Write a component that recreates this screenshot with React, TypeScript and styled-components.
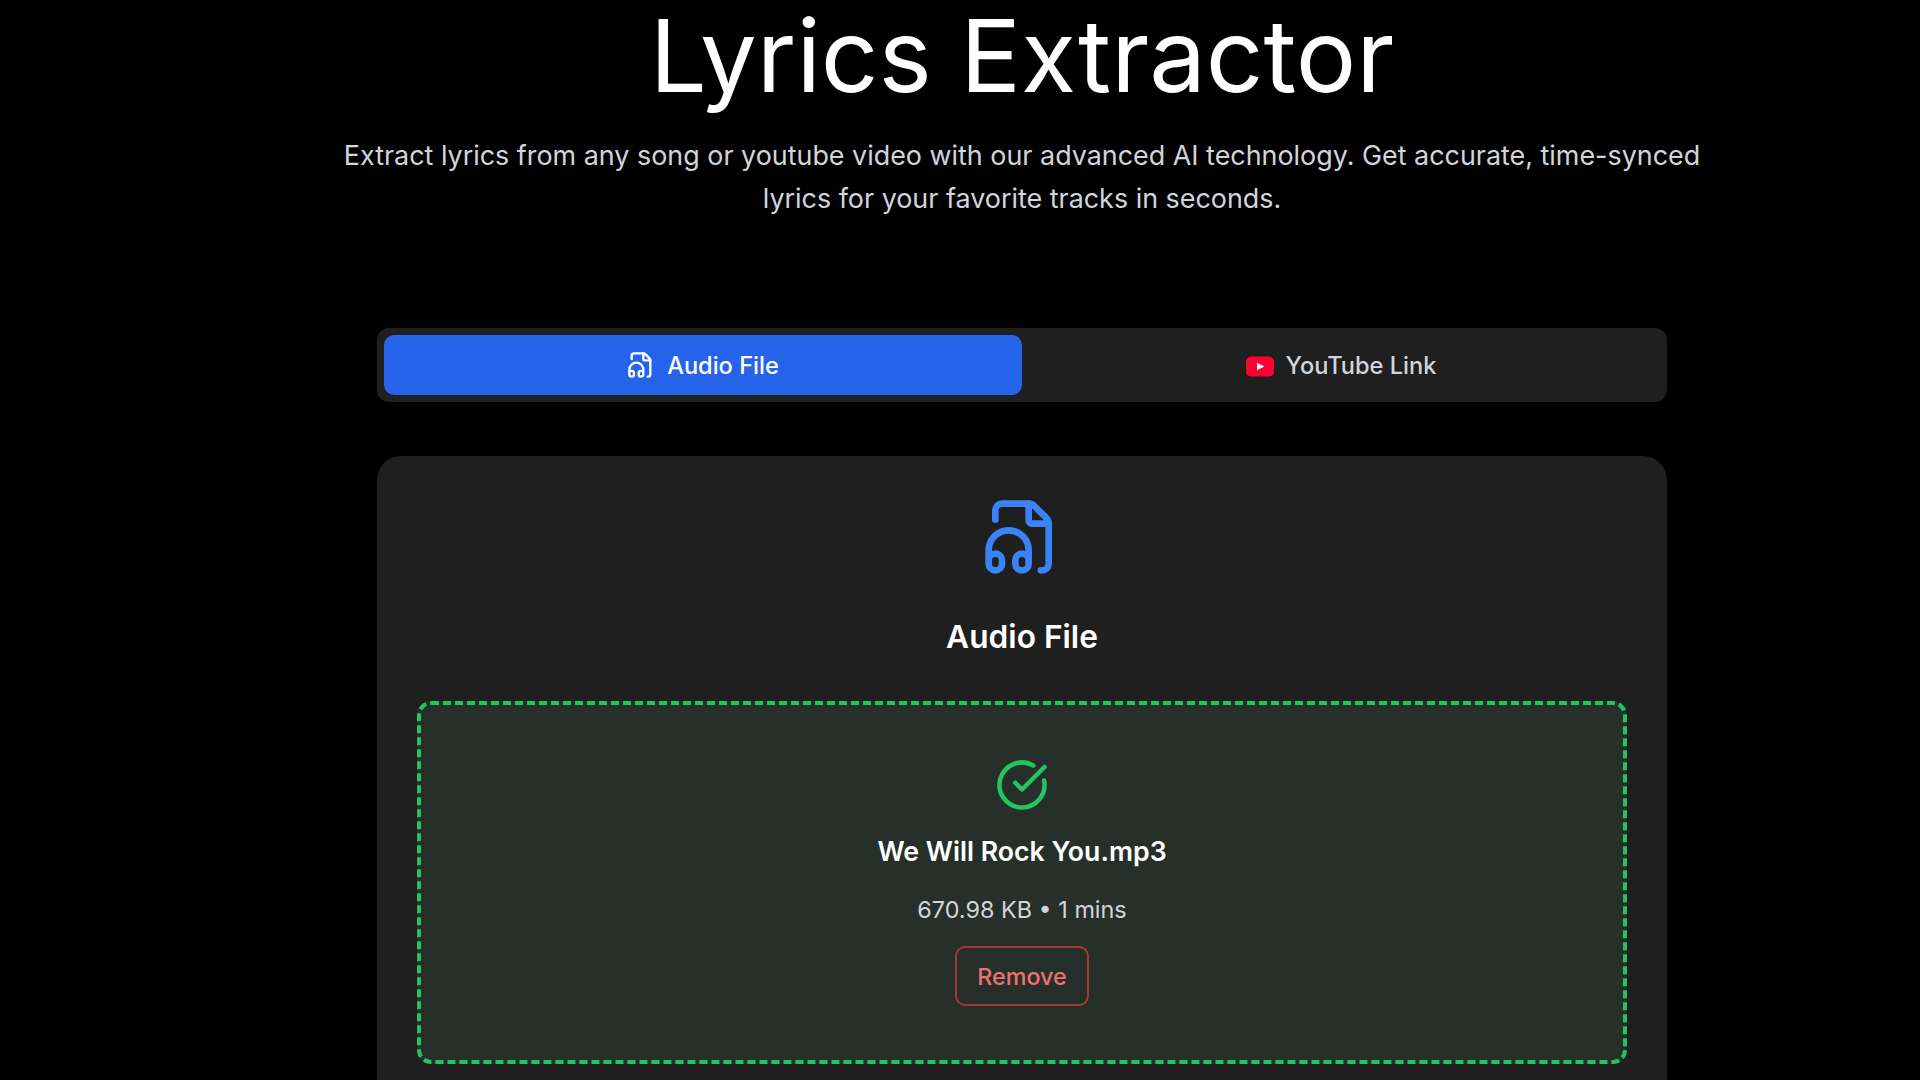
import React, { useState } from "react";
import styled, { createGlobalStyle } from "styled-components";

const GlobalStyle = createGlobalStyle`
  html, body {
    margin: 0;
    padding: 0;
    height: 100%;
    overflow: hidden;
    background: #000;
  }
  * {
    box-sizing: border-box;
  }
`;

const FileHeadphoneIcon: React.FC<{ size: number; color: string }> = ({ size, color }) => (
  <svg
    width={size}
    height={size}
    viewBox="0 0 24 24"
    fill="none"
    stroke={color}
    strokeWidth="2"
    strokeLinecap="round"
    strokeLinejoin="round"
  >
    <path d="M4 6.835V4a2 2 0 0 1 2-2h8a2.4 2.4 0 0 1 1.706.706l3.588 3.588A2.4 2.4 0 0 1 20 8v12a2 2 0 0 1-2 2h-.343" />
    <path d="M14 2v5a1 1 0 0 0 1 1h5" />
    <path d="M2 19a2 2 0 0 1 4 0v1a2 2 0 0 1-4 0v-4a6 6 0 0 1 12 0v4a2 2 0 0 1-4 0v-1a2 2 0 0 1 4 0" />
  </svg>
);

const YoutubeIcon: React.FC = () => (
  <svg width="28" height="24" viewBox="0 0 28 24">
    <rect x="0" y="3.5" width="28" height="20" rx="5" fill="#ff0033" />
    <path d="M11 9.7 18.4 13.5 11 17.3z" fill="#fff" />
  </svg>
);

const CheckIcon: React.FC = () => (
  <svg
    width="54"
    height="54"
    viewBox="0 0 24 24"
    fill="none"
    stroke="#22c55e"
    strokeWidth="2"
    strokeLinecap="round"
    strokeLinejoin="round"
  >
    <path d="M21.801 10A10 10 0 1 1 17 3.335" />
    <path d="m9 11 3 3L22 4" />
  </svg>
);

const App: React.FC = () => {
  const [tab, setTab] = useState<"audio" | "youtube">("audio");

  return (
    <Page>
      <GlobalStyle />
      <Title>Lyrics Extractor</Title>
      <Subtitle>
        Extract lyrics from any song or youtube video with our advanced AI technology. Get accurate,
        time-synced lyrics for your favorite tracks in seconds.
      </Subtitle>

      <Tabs>
        <TabButton $active={tab === "audio"} onClick={() => setTab("audio")}>
          <FileHeadphoneIcon size={28} color="#fff" />
          Audio File
        </TabButton>
        <TabButton $active={tab === "youtube"} onClick={() => setTab("youtube")}>
          <YoutubeIcon />
          YouTube Link
        </TabButton>
      </Tabs>

      <Card>
        <CardIcon>
          <FileHeadphoneIcon size={80} color="#3b82f6" />
        </CardIcon>
        <CardTitle>Audio File</CardTitle>
        <DropZone>
          <CheckIcon />
          <FileName>We Will Rock You.mp3</FileName>
          <FileMeta>670.98 KB • 1 mins</FileMeta>
          <RemoveButton>Remove</RemoveButton>
        </DropZone>
      </Card>
    </Page>
  );
};

export default App;

const Page = styled.div`
  width: 1290px;
  margin-left: 377px;
  display: flex;
  flex-direction: column;
  align-items: center;
  font-family: Inter, "Liberation Sans", sans-serif;
  color: #fff;
`;

const Title = styled.h1`
  margin: 0;
  height: 112px;
  font-size: 101px;
  line-height: 110px;
  font-weight: 400;
  white-space: nowrap;
`;

const Subtitle = styled.p`
  margin: 22px 0 0;
  width: 1370px;
  height: 88px;
  flex-shrink: 0;
  font-size: 26.9px;
  line-height: 43px;
  text-align: center;
  color: #d1d5db;
`;

const Tabs = styled.div`
  margin-top: 106px;
  width: 100%;
  height: 74px;
  padding: 7px;
  display: flex;
  background: #1f1f1f;
  border-radius: 12px;
`;

const TabButton = styled.button<{ $active: boolean }>`
  flex: 1;
  display: flex;
  align-items: center;
  justify-content: center;
  gap: 12px;
  border: none;
  border-radius: 10px;
  font-family: inherit;
  font-size: 23.6px;
  font-weight: 500;
  cursor: pointer;
  color: ${(props) => (props.$active ? "#fff" : "#d1d5db")};
  background: ${(props) => (props.$active ? "#2563eb" : "transparent")};
`;

const Card = styled.section`
  margin-top: 54px;
  width: 100%;
  padding: 41px 40px 40px;
  display: flex;
  flex-direction: column;
  align-items: center;
  background: #1f1f1f;
  border-radius: 24px;
`;

const CardIcon = styled.div`
  display: flex;
  height: 80px;
  margin-left: -1px;
`;

const CardTitle = styled.h2`
  margin: 36px 0 0;
  font-size: 31.7px;
  line-height: 48px;
  font-weight: 600;
`;

const DropZone = styled.div`
  margin-top: 40px;
  width: 100%;
  height: 363px;
  padding-top: 53px;
  display: flex;
  flex-direction: column;
  align-items: center;
  background: #262f29;
  border: 4px dashed #22c55e;
  border-radius: 14px;
`;

const FileName = styled.div`
  margin-top: 19px;
  font-size: 26.7px;
  line-height: 40px;
  font-weight: 600;
`;

const FileMeta = styled.div`
  margin-top: 21px;
  font-size: 23.4px;
  line-height: 36px;
  color: #d1d5db;
`;

const RemoveButton = styled.button`
  margin-top: 18px;
  width: 134px;
  height: 60px;
  font-family: inherit;
  font-size: 23.3px;
  font-weight: 500;
  color: #ee7070;
  background: transparent;
  border: 2px solid #ab3535;
  border-radius: 10px;
  cursor: pointer;
`;
